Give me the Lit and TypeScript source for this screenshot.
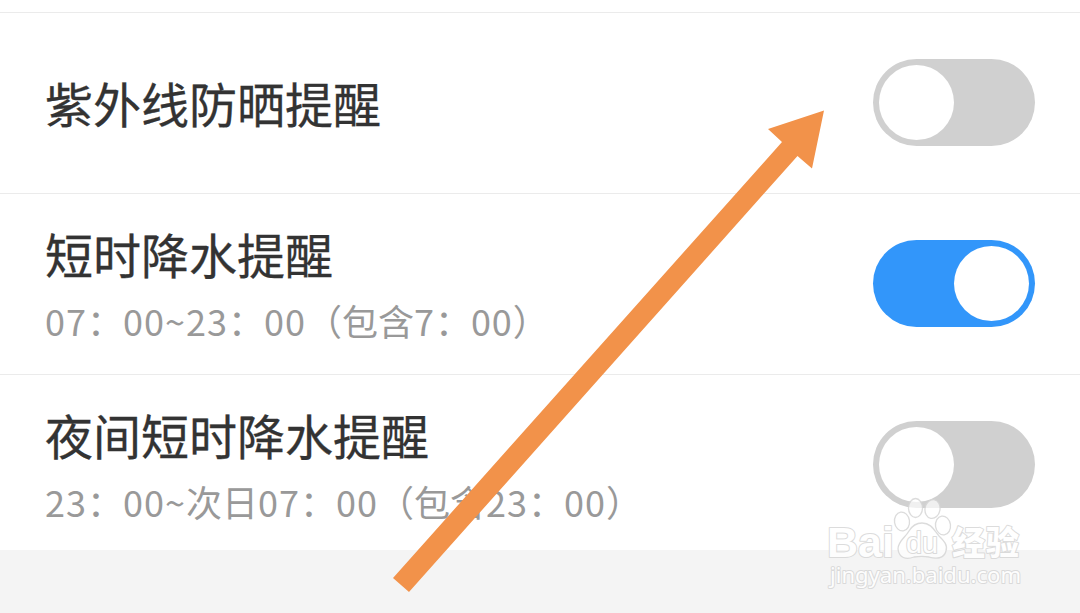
import { LitElement, html, css, svg } from "lit";
import { customElement, property } from "lit/decorators.js";

@customElement("toggle-switch")
class ToggleSwitch extends LitElement {
  @property({ type: Boolean, reflect: true }) on = false;
  static styles = css`
    :host { display: flex; box-sizing: border-box; width: 162px; height: 87px; padding: 6px; border-radius: 44px; background: #d0d0d0; flex: none; }
    :host([on]) { background: #3296fa; justify-content: flex-end; }
    .knob { width: 75px; height: 75px; border-radius: 50%; background: #fff; }
  `;
  render() {
    return html`<div class="knob"></div>`;
  }
}

@customElement("setting-row")
class SettingRow extends LitElement {
  @property() label = "";
  @property() detail = "";
  @property({ type: Boolean }) on = false;
  static styles = css`
    :host { display: flex; box-sizing: border-box; height: 181px; padding: 0 45px 2px; align-items: center; justify-content: space-between; border-top: 1px solid #ebebeb; white-space: nowrap; }
    .texts { padding-bottom: 1px; }
    .label { font-size: 48px; line-height: 66px; color: #333; -webkit-text-stroke: 0.3px #333; }
    .detail { font-size: 36px; line-height: 50px; margin-top: 9px; color: #999; }
    .num { letter-spacing: 1px; }
  `;
  render() {
    const parts = this.detail.split(/([0-9~]+)/);
    return html`
      <div class="texts">
        <div class="label">${this.label}</div>
        ${this.detail
          ? html`<div class="detail">${parts.map((p, i) => (i % 2 ? html`<span class="num">${p}</span>` : p))}</div>`
          : ""}
      </div>
      <toggle-switch ?on=${this.on}></toggle-switch>
    `;
  }
}

@customElement("app-root")
class AppRoot extends LitElement {
  static styles = css`
    :host { display: block; position: relative; width: 1080px; height: 613px; overflow: hidden; background: #f4f4f4; font-family: "Noto Sans CJK SC", sans-serif; }
    .list { background: #fff; height: 550px; padding-top: 12px; box-sizing: border-box; }
    .overlay { position: absolute; left: 0; top: 0; }
    .mark { fill: #fff; stroke: #d6d6d6; stroke-width: 2; stroke-linejoin: round; paint-order: stroke; opacity: 0.85; }
    .toe, .pad { fill-opacity: 0.8; stroke-width: 1.3; paint-order: normal; }
    .brand { font: bold 43px "Liberation Sans", sans-serif; }
    .du { font: 29px "Liberation Sans", sans-serif; }
    .cn { font: 900 33px "Noto Sans CJK SC", sans-serif; }
    .url { font: 22px "Noto Sans", sans-serif; }
    .arrow { fill: #f2924a; }
  `;
  render() {
    return html`
      <div class="list">
        <setting-row label="紫外线防晒提醒"></setting-row>
        <setting-row label="短时降水提醒" detail="07：00~23：00（包含7：00）" on></setting-row>
        <setting-row label="夜间短时降水提醒" detail="23：00~次日07：00（包含23：00）"></setting-row>
      </div>
      <svg class="overlay" width="1080" height="613" viewBox="0 0 1080 613">
        <g class="mark">
          ${[
            [902, 521.5, 7.5, 9.5, -8],
            [915.5, 508, 7, 9.5, 0],
            [932.5, 509, 7.5, 9.5, 10],
            [943, 525.5, 7.5, 9.5, -8],
          ].map(([x, y, rx, ry, a]) => svg`<ellipse class="toe" cx=${x} cy=${y} rx=${rx} ry=${ry} transform="rotate(${a} ${x} ${y})"/>`)}
          <path class="pad" d="M922 523C931 523 934 530 939 536C944 541 948 545 946 551C944 559 936 559 929 557C924 556 920 556 914 557C906 560 899 558 898 549C898 541 905 538 909 531C912 526 916 523 922 523Z" />
          <text class="brand" x="827" y="557" textLength="67" lengthAdjust="spacingAndGlyphs">Bai</text>
          <text class="du" x="906" y="553" textLength="32" lengthAdjust="spacingAndGlyphs">du</text>
          <text class="cn" x="952" y="555" textLength="67">经验</text>
          <text class="url" x="830" y="583" textLength="191" lengthAdjust="spacingAndGlyphs">jingyan.baidu.com</text>
        </g>
        <path class="arrow" d="M824 110.5L768 129L782 142L393 578L409 592L797.500 156L812 168.500Z" />
      </svg>
    `;
  }
}
